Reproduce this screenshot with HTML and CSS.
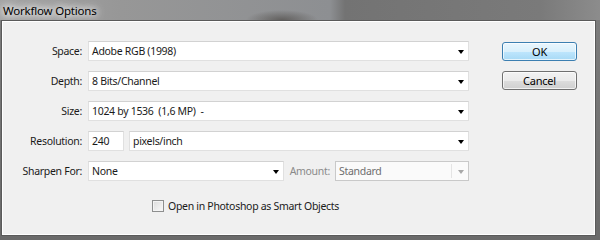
FILE: index.html
```html
<!DOCTYPE html>
<html lang="en">
<head>
    <meta charset="UTF-8">
    <title>Workflow Options</title>
    <link rel="stylesheet" href="styles.css">
</head>
<body>
    <div class="window">
        <div class="titlebar">
            <span class="title">Workflow Options</span>
        </div>
        <div class="panel">
            <div class="form">
                <label class="label">Space:</label>
                <div class="select"><span>Adobe RGB (1998)</span><i class="arrow"></i></div>

                <label class="label">Depth:</label>
                <div class="select"><span>8 Bits/Channel</span><i class="arrow"></i></div>

                <label class="label">Size:</label>
                <div class="select"><span>1024 by 1536 &nbsp;(1,6 MP) &nbsp;-</span><i class="arrow"></i></div>

                <label class="label">Resolution:</label>
                <div class="field-row">
                    <div class="input res-input">240</div>
                    <div class="select grow"><span>pixels/inch</span><i class="arrow"></i></div>
                </div>

                <label class="label">Sharpen For:</label>
                <div class="field-row">
                    <div class="select sharpen"><span>None</span><i class="arrow"></i></div>
                    <span class="label disabled-label grow">Amount:</span>
                    <div class="select disabled amount"><span>Standard</span><i class="arrow"></i></div>
                </div>

                <div class="check-row">
                    <span class="checkbox"></span>
                    <span>Open in Photoshop as Smart Objects</span>
                </div>
            </div>
            <div class="buttons">
                <button class="btn default">OK</button>
                <button class="btn">Cancel</button>
            </div>
        </div>
    </div>
</body>
</html>
```

FILE: styles.css
```css
* {
    box-sizing: border-box;
}

body {
    margin: 0;
    width: 600px;
    height: 240px;
    overflow: hidden;
    font-family: "Noto Sans", "DejaVu Sans", sans-serif;
    font-size: 10.5px;
    letter-spacing: -0.3px;
    color: #1a1a1a;
}

.window {
    height: 240px;
    display: flex;
    flex-direction: column;
    background: linear-gradient(to bottom, #7e7e7e, #6a6a6a);
    padding: 0 4px 4px 1px;
}

.titlebar {
    height: 20px;
    margin: 0 -4px 0 -1px;
    padding-left: 3px;
    display: flex;
    align-items: center;
    background:
        radial-gradient(ellipse 36px 10px at 282px 20px, rgba(60,55,50,0.55), transparent),
        linear-gradient(to right, #a4a4a4 0, #979797 120px, #8d8f92 330px, #737373 345px, #7a7a7a 540px, #8c8c8c 600px);
}

.title {
    font-size: 11.5px;
    letter-spacing: -0.2px;
    color: #000;
    text-shadow: 0 0 6px #fff, 0 0 10px #fff, 0 0 12px rgba(255,255,255,0.8);
}

.panel {
    flex: 1;
    display: flex;
    background: #f0f0f0;
    border: 1px solid #5a5a5a;
    box-shadow: inset 1px 1px 0 #fff, inset -1px -1px 0 #fff;
    padding: 20px 0 0 0;
}

.form {
    display: grid;
    grid-template-columns: 80px 381px;
    column-gap: 6px;
    row-gap: 10px;
    grid-auto-rows: 20px;
    align-content: start;
}

.label {
    display: flex;
    align-items: center;
    justify-content: flex-end;
    white-space: nowrap;
}

.select,
.input {
    height: 20px;
    display: flex;
    align-items: center;
    background: #fff;
    border: 1px solid #e0e0e0;
    border-top-color: #d2d2d2;
    padding-left: 3px;
    position: relative;
    white-space: nowrap;
}

.arrow {
    position: absolute;
    right: 4px;
    top: 8px;
    width: 0;
    height: 0;
    border-left: 3.5px solid transparent;
    border-right: 3.5px solid transparent;
    border-top: 4px solid #000;
}

.field-row {
    display: flex;
    gap: 5px;
}

.grow {
    flex: 1;
}

.res-input {
    width: 36px;
}

.sharpen {
    width: 196px;
}

.amount {
    width: 134px;
}

.disabled-label {
    color: #8a8a8a;
}

.select.disabled {
    color: #6d6d6d;
    border-color: #c9c9c9;
    background: #fafafa;
}

.select.disabled::after {
    content: '';
    position: absolute;
    right: 16px;
    top: 2px;
    bottom: 2px;
    border-left: 1px solid #e4e4e4;
}

.select.disabled .arrow {
    border-top-color: #a8a8a8;
}

.check-row {
    grid-column: 1 / span 2;
    margin-top: 10px;
    padding-left: 150px;
    display: flex;
    align-items: center;
    gap: 4px;
}

.checkbox {
    width: 12px;
    height: 12px;
    border: 1px solid #8e8f8f;
    background: linear-gradient(135deg, #dcdcdc, #fafafa);
    box-shadow: inset 0 0 0 1px #f4f4f4;
}

.buttons {
    margin-left: 33px;
    padding-top: 1px;
    display: flex;
    flex-direction: column;
    gap: 10px;
}

.btn {
    width: 75px;
    height: 19px;
    font-family: inherit;
    font-size: 11px;
    letter-spacing: -0.2px;
    color: #000;
    padding: 0;
    border: 1px solid #707070;
    border-radius: 3px;
    background: linear-gradient(to bottom, #f2f2f2 0, #ebebeb 50%, #dddddd 51%, #cfcfcf 100%);
    box-shadow: inset 0 0 0 1px rgba(255,255,255,0.7);
}

.btn.default {
    border-color: #3c7fb1;
    background: linear-gradient(to bottom, #eaf6fd 0, #d9f0fc 50%, #bee6fd 51%, #a7d9f5 100%);
}
```
